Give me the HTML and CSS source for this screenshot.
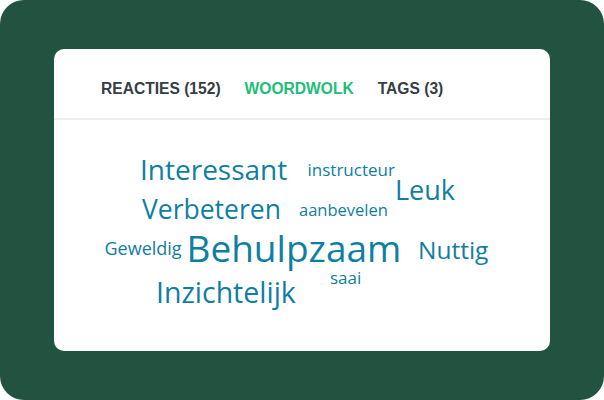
FILE: index.html
```html
<!DOCTYPE html>
<html lang="nl">
<head>
<meta charset="utf-8">
<title>Woordwolk</title>
<link rel="stylesheet" href="styles.css">
</head>
<body>
<div class="frame">
  <div class="card">
    <nav class="tabs">
      <span class="tab">REACTIES (152)</span>
      <span class="tab active">WOORDWOLK</span>
      <span class="tab">TAGS (3)</span>
    </nav>
    <div class="cloud">
      <span class="word w-interessant">Interessant</span>
      <span class="word w-instructeur">instructeur</span>
      <span class="word w-leuk">Leuk</span>
      <span class="word w-verbeteren">Verbeteren</span>
      <span class="word w-aanbevelen">aanbevelen</span>
      <span class="word w-geweldig">Geweldig</span>
      <span class="word w-behulpzaam">Behulpzaam</span>
      <span class="word w-nuttig">Nuttig</span>
      <span class="word w-saai">saai</span>
      <span class="word w-inzichtelijk">Inzichtelijk</span>
    </div>
  </div>
</div>
</body>
</html>
```
FILE: styles.css
```css
html, body {
  margin: 0;
  padding: 0;
  background: #ffffff;
}
.frame {
  width: 604px;
  height: 400px;
  box-sizing: border-box;
  background: #225240;
  border-radius: 24px;
  padding: 49px 54px 0 54px;
}
.card {
  width: 496px;
  height: 302px;
  background: #ffffff;
  border-radius: 10px;
  display: flex;
  flex-direction: column;
  overflow: hidden;
}
.tabs {
  display: flex;
  gap: 24px;
  padding: 10px 0 0 47px;
  height: 71px;
  flex: none;
  align-items: center;
  border-bottom: 2px solid #eeeeee;
  font-family: "Liberation Sans", Arial, sans-serif;
  font-weight: 700;
  font-size: 15.6px;
  color: #353d45;
  box-sizing: border-box;
}
.tab.active {
  color: #22bd78;
}
.cloud {
  position: relative;
  flex: 1;
  font-family: "Open Sans", sans-serif;
  color: #0f7ea3;
}
.word {
  position: absolute;
  line-height: 0.9;
  white-space: nowrap;
}
.w-interessant { font-size: 28px;   left: 86px;  top: 36.5px; }
.w-instructeur { font-size: 17px;   left: 253.5px; top: 41.8px; }
.w-leuk        { font-size: 27px;   left: 341px; top: 58.4px; }
.w-verbeteren  { font-size: 26.5px; left: 88px;  top: 77.8px; }
.w-aanbevelen  { font-size: 16.5px; left: 245px; top: 82.8px; }
.w-geweldig    { font-size: 18px;   left: 50.5px;  top: 119.9px; }
.w-behulpzaam  { font-size: 37px;   left: 132.5px; top: 111px; }
.w-nuttig      { font-size: 24.5px; left: 364px; top: 118.5px; }
.w-saai        { font-size: 17px;   left: 276px; top: 149.8px; }
.w-inzichtelijk{ font-size: 28.5px; left: 102px; top: 160.1px; }
```
